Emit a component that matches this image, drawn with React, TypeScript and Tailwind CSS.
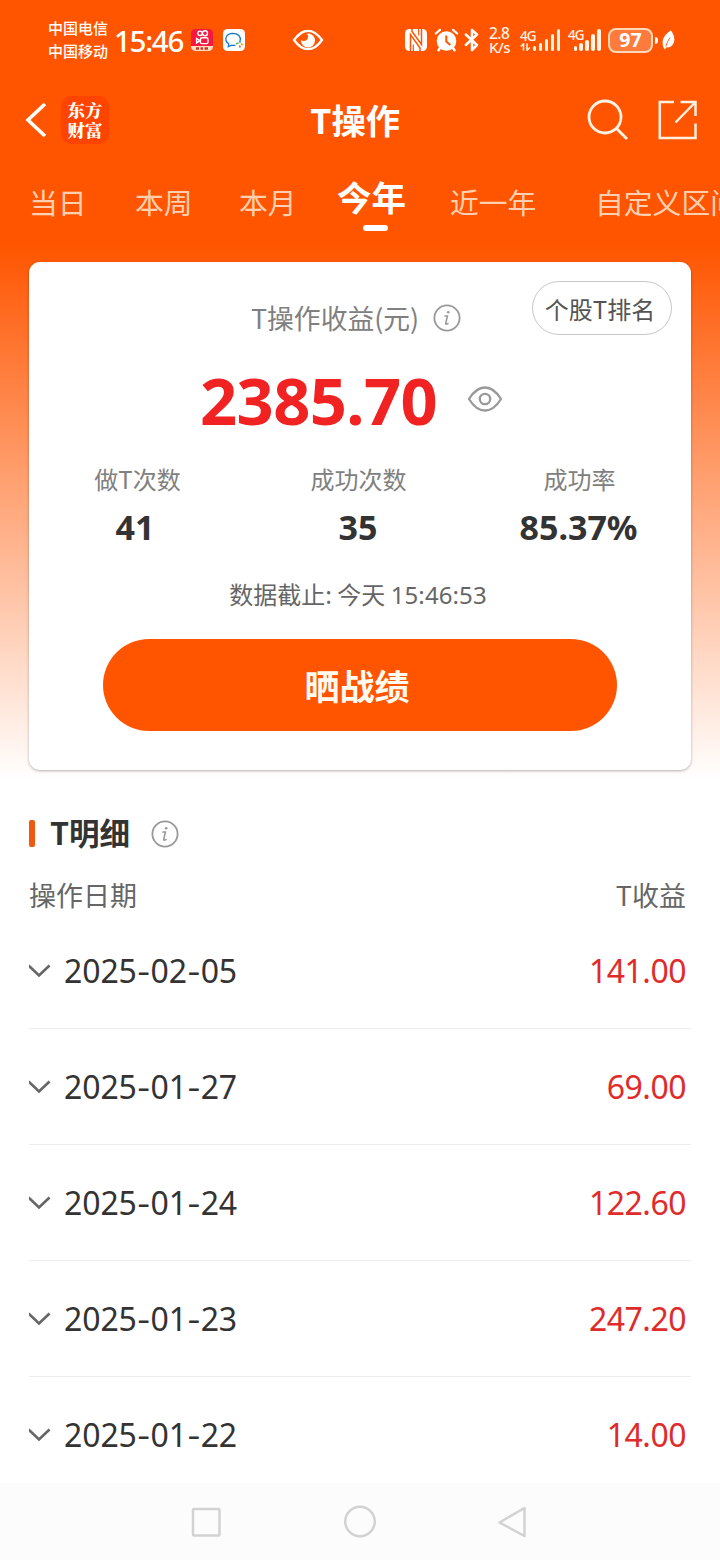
import type { ReactNode } from "react";

const rows = [
  { date: "2025-02-05", profit: "141.00" },
  { date: "2025-01-27", profit: "69.00" },
  { date: "2025-01-24", profit: "122.60" },
  { date: "2025-01-23", profit: "247.20" },
  { date: "2025-01-22", profit: "14.00" },
];

const tabs = [
  { label: "当日", box: "w-[106px]" },
  { label: "本周", box: "w-[104px]" },
  { label: "本月", box: "w-[98px]" },
  { label: "今年", box: "w-[113px]", active: true },
  { label: "近一年", box: "w-[145px]" },
  { label: "自定义区间", box: "w-[150px]" },
];

const stats = [
  { label: "做T次数", value: "41", nudge: "pr-[5px]" },
  { label: "成功次数", value: "35", nudge: "pr-[1px]" },
  { label: "成功率", value: "85.37%", nudge: "pr-[2px]" },
];

function InfoIcon({ className }: { className?: string }) {
  return (
    <svg className={className} width="28" height="28" viewBox="0 0 28 28" fill="none" stroke="#999" strokeWidth="1.8">
      <circle cx="14" cy="14" r="12.6" />
      <path d="M11.400 12h3l-1.600 7.200q-.2 1.300 1 .9l1.700-.8" strokeWidth="1.600" />
      <circle cx="15.200" cy="8.200" r="1.300" fill="#999" stroke="none" />
    </svg>
  );
}

function Signal({ heights, className }: { heights: number[]; className?: string }) {
  return (
    <div className={"flex items-end " + (className ?? "")}>
      {heights.map((h) => (
        <i key={h} className="block w-[3.600px] flex-none rounded-full bg-[#fff3e6]" style={{ height: h }} />
      ))}
    </div>
  );
}

function StatusBar() {
  return (
    <div className="flex h-[80px] items-center pl-[48px] text-white">
      <div className="mb-[2px] w-[66px] flex-none text-[15px] font-medium leading-[23px] whitespace-nowrap">
        <div>中国电信</div>
        <div>中国移动</div>
      </div>
      <div className="mt-[2px] w-[77px] flex-none font-['Noto_Sans'] text-[29.500px] font-medium leading-[40px] tracking-[-1.300px]">15:46</div>
      <svg className="flex-none" width="22" height="22" viewBox="0 0 22 22">
        <defs>
          <clipPath id="appTile"><rect width="22" height="22" rx="4.500" /></clipPath>
        </defs>
        <g clipPath="url(#appTile)">
          <rect width="22" height="22" fill="#f7173f" />
          <rect y="17" width="22" height="5" fill="#ffe0c0" />
          <g fill="none" stroke="#fff" strokeWidth="1.400">
            <circle cx="9" cy="4.300" r="2.200" />
            <circle cx="14" cy="4.300" r="2.500" />
            <rect x="9.400" y="8.800" width="7.600" height="5.800" rx="1.600" />
            <path d="M9 11.700 5.600 9.500v4.400z" />
          </g>
          <path d="M5 19.500h3M9.500 19.500h2.500M13.500 19.500h3.500" stroke="#c6362c" strokeWidth="2.400" />
        </g>
      </svg>
      <svg className="ml-[10px] flex-none" width="22" height="22" viewBox="0 0 22 22" fill="none">
        <rect width="22" height="22" rx="4.500" fill="#fff" />
        <path d="M12.500 16.200a7.800 7.800 0 0 1-3.800 0L5.300 17.600l.5-2.800C.6 11.400 2.600 4.500 9.800 4.300c5.200 0 8.300 3.600 7.500 7.400" stroke="#1677c9" strokeWidth="1.300" />
        <path d="m16.400 11.500 1 2.200" stroke="#2b91e3" strokeWidth="1.700" />
        <path d="m18 14.500 2 1.500" stroke="#f0b321" strokeWidth="1.800" />
        <path d="m16.500 16.500.7 2" stroke="#e85a36" strokeWidth="1.700" />
        <path d="m13 14.800 2.600-.8" stroke="#58b957" strokeWidth="1.700" />
      </svg>
      <svg className="ml-[47px] flex-none" width="32" height="22" viewBox="0 0 32 22">
        <path d="M2 11Q8.500 1.800 16 1.800t14 9.200q-6.500 9.200-14 9.200T2 11Z" fill="none" stroke="#fff" strokeWidth="2.300" />
        <circle cx="16" cy="11.500" r="7" fill="#fff" />
        <circle cx="11.800" cy="7.600" r="4.300" fill="#ff5500" />
        <path d="M5 7.800Q10 1.800 16 1.800" fill="none" stroke="#fff" strokeWidth="2.300" />
      </svg>
      <svg className="ml-[81px] flex-none" width="22" height="22" viewBox="0 0 22 22" fill="#fff">
        <rect width="22" height="22" rx="4.500" />
        <g fill="none" stroke="#ff5500" strokeWidth="1.500">
          <path d="M5.500 22V5.500L15 19v3M16.500 0v15.500L7 2.500V0" />
          <path d="M8.300 22v-6.500M13.700 0v6.500" strokeWidth="1.200" />
        </g>
      </svg>
      <svg className="ml-[7px] flex-none" width="25" height="24" viewBox="0 0 25 24" fill="none" stroke="#fff">
        <circle cx="12.500" cy="13" r="9.800" fill="#fff" stroke="none" />
        <path d="M1.800 5.500 6 1.800M23.200 5.500 19 1.800" strokeWidth="2.200" strokeLinecap="round" />
        <path d="m6 20-1.500 2.300M19 20l1.500 2.300" strokeWidth="2.500" strokeLinecap="round" />
        <path d="M12.300 7.500v6l4 3.500" stroke="#ff5500" strokeWidth="2" />
      </svg>
      <svg className="ml-[5px] flex-none" width="15" height="24" viewBox="0 0 15 24" fill="none" stroke="#fff" strokeWidth="2.500">
        <path d="m1.800 6.500 11.200 10.500-5 5V2l5 4.500L1.800 17" strokeLinejoin="round" strokeLinecap="round" />
      </svg>
      <div className="ml-[10px] w-[31px] flex-none font-['Noto_Sans'] text-[15.500px] font-medium leading-[14.500px] tracking-[-0.500px] text-[#fff3e6]">
        <div>2.8</div>
        <div className="text-[15px]">K/s</div>
      </div>
      <div className="flex h-[26px] w-[48px] flex-none items-end">
        <div className="w-[12.500px] flex-none font-['Noto_Sans'] text-[13.500px] font-medium leading-[14px] tracking-[-1px] text-[#fff3e6]">
          <div>4G</div>
          <svg className="mb-[2px]" width="11" height="8" viewBox="0 0 11 8" fill="none" stroke="#fff3e6" strokeWidth="1.500">
            <path d="M3.500 7.500V.8L.8 3.500M7 .5v6.700l2.800-2.700" />
          </svg>
        </div>
        <Signal heights={[5, 8, 12, 17, 22]} className="mb-[2px] gap-[2.500px]" />
      </div>
      <div className="flex h-[26px] w-[40px] flex-none items-end">
        <div className="mb-[11px] w-[5.500px] flex-none font-['Noto_Sans'] text-[13.500px] font-medium leading-[14px] tracking-[-1px] text-[#fff3e6]">4G</div>
        <Signal heights={[5, 8, 11, 17, 22]} className="mb-[2px] gap-[2.300px]" />
      </div>
      <div className="flex h-[25px] w-[45px] flex-none items-center justify-center rounded-[8px] border-2 border-[#ffd9b8] bg-[#ff7a3d] font-['Noto_Sans'] text-[19.500px] font-bold leading-[20px]">97</div>
      <i className="ml-[1.500px] block h-[7px] w-[3px] flex-none rounded-r-full bg-white" />
      <svg className="ml-[4.500px] flex-none" width="13" height="20" viewBox="0 0 13 20">
        <path d="M9 .5c3.500 5 4.500 10 1.800 14-1.500 2.200-4 3.200-6.300 2.800L3 19.500 1.700 18C-1 12 1 5 9 .5Z" fill="#fff" />
        <path d="M3.800 16.500Q5.500 11 8 7.500" fill="none" stroke="#ff5500" strokeWidth=".9" />
      </svg>
    </div>
  );
}

function Header() {
  return (
    <div className="flex h-[80px] items-center text-white">
      <svg className="ml-[24px] flex-none" width="24" height="36" viewBox="0 0 24 36" fill="none" stroke="#fff" strokeWidth="3.600">
        <path d="M21 2 4 18l17 16" />
      </svg>
      <div className="ml-[13px] flex h-[48px] w-[48px] flex-none flex-col items-center justify-center rounded-[10px] bg-[#ff4400] pb-[1px] font-['Noto_Serif_CJK_SC','Noto_Sans_CJK_SC',serif] text-[17.500px] font-black leading-[20px]">
        <div>东方</div>
        <div>财富</div>
      </div>
      <div className="mb-[2px] ml-[201px] w-[277px] flex-none text-[34.300px] font-bold leading-[48px]">T操作</div>
      <svg className="flex-none" width="42" height="42" viewBox="0 0 42 42" fill="none" stroke="#fff3e6" strokeWidth="2.800">
        <circle cx="18" cy="18" r="16" />
        <path d="m29 29 11 11" />
      </svg>
      <svg className="ml-[29px] flex-none" width="40" height="40" viewBox="0 0 40 40" fill="none" stroke="#fff0df" strokeWidth="2.500">
        <path d="M16 2H1.800v36H37.500V23.500M22.500 2h15V16M37.500 2 17.500 22.500" />
      </svg>
    </div>
  );
}

function Tabs() {
  return (
    <div className="flex h-[102px] overflow-hidden pl-[29px] whitespace-nowrap">
      {tabs.map((t) =>
        t.active ? (
          <div key={t.label} className={"flex-none pt-[12px] text-[34.500px] font-bold leading-[48px] text-white " + t.box}>
            {t.label}
            <i className="ml-[26px] mt-[5px] block h-[6px] w-[25px] rounded-full bg-white" />
          </div>
        ) : (
          <div key={t.label} className={"flex-none pt-[18px] text-[28.800px] leading-[48px] text-[#ffd0b0] " + t.box}>{t.label}</div>
        )
      )}
    </div>
  );
}

function SummaryCard() {
  return (
    <section className="mx-[29px] flex h-[508px] flex-col rounded-[11px] bg-white shadow-[0_1px_3px_rgba(0,0,0,0.3)]">
      <div className="flex h-[92px]">
        <div className="ml-[222px] mt-[36px] w-[182px] flex-none whitespace-nowrap text-[26.800px] leading-[40px] text-[#808080]">T操作收益(元)</div>
        <InfoIcon className="mt-[42px] flex-none" />
        <button className="ml-[71px] mt-[19px] flex h-[54px] w-[140px] flex-none items-center justify-center rounded-full border border-[#c8c8c8] pr-[4px] pt-[1px] text-[24px] whitespace-nowrap text-[#555]">个股T排名</button>
      </div>
      <div className="flex h-[100px] items-center">
        <div className="mb-[8px] ml-[171px] w-[267px] flex-none font-['Noto_Sans'] text-[65px] font-bold leading-[80px] tracking-[-0.600px] text-[#f02222]">2385.70</div>
        <svg className="mb-[10px]" width="36" height="28" viewBox="0 0 36 28" fill="none" stroke="#999" strokeWidth="2.300">
          <path d="M2 14Q9 2.500 18 2.500T34 14Q27 25.500 18 25.500T2 14Z" />
          <circle cx="18" cy="14" r="5.200" />
        </svg>
      </div>
      <Stats />
      <div className="mr-[4px] mt-[27px] text-center text-[24px] leading-[36px] text-[#666]">
        数据截止: 今天 <Num className="text-[24px] tracking-[0.100px]">15:46:53</Num>
      </div>
      <button className="mx-auto mt-[26px] h-[92px] w-[514px] flex-none rounded-full bg-[#ff5500] pr-[6px] text-[35px] font-bold text-[#fffaf0]">晒战绩</button>
    </section>
  );
}

function Num({ children, className }: { children: ReactNode; className?: string }) {
  return <span className={"font-['Noto_Sans'] " + (className ?? "")}>{children}</span>;
}

function Stats() {
  return (
    <div className="-ml-[2px] grid w-[663px] grid-cols-3 text-center">
      {stats.map((s) => (
        <div key={s.label}>
          <div className="mt-[7px] text-[24px] leading-[36px] text-[#808080]">{s.label}</div>
          <div className={"mt-[8px] font-['Noto_Sans'] text-[34px] font-bold leading-[44px] text-[#333] " + s.nudge}>{s.value}</div>
        </div>
      ))}
    </div>
  );
}

function DateLabel({ date }: { date: string }) {
  const [year, month, day] = date.split("-");
  const dash = <span className="font-['Inter'] text-[30px]">-</span>;
  return (
    <span className="ml-[13px] tracking-[-0.100px] text-[#333]">
      {year}{dash}{month}{dash}{day}
    </span>
  );
}

function Details() {
  return (
    <section className="mx-[29px] h-[713px] overflow-hidden pt-[39px]">
      <div className="flex h-[48px] items-center">
        <i className="block h-[27px] w-[6px] rounded-[2px] bg-[#f05a10]" />
        <h2 className="ml-[15px] w-[101px] text-[30.500px] font-bold text-[#333]">T明细</h2>
        <InfoIcon className="mt-px" />
      </div>
      <div className="mt-[18px] flex h-[38px] justify-between pr-[5px] text-[27px] leading-[40px] text-[#666]">
        <span>操作日期</span>
        <span>T收益</span>
      </div>
      {rows.map((r) => (
        <div key={r.date} className="flex h-[116px] items-center border-b border-[#ececec] pr-[5px] font-['Noto_Sans'] text-[32px]">
          <svg className="-ml-[2px] flex-none" width="24" height="16" viewBox="0 0 24 16" fill="none" stroke="#666" strokeWidth="2.700">
            <path d="m1.500 2.500 10.500 10L22.500 2.500" />
          </svg>
          <DateLabel date={r.date} />
          <span className="ml-auto tracking-[-0.500px] text-[#e02b2b]">{r.profit}</span>
        </div>
      ))}
    </section>
  );
}

function NavBar() {
  return (
    <nav className="flex h-[77px] items-center bg-[#fcfcfc]">
      <svg className="mx-auto" width="338" height="36" viewBox="0 0 338 36" fill="none" stroke="#d2d2d2" strokeWidth="2.500" strokeLinejoin="round">
        <rect x="2" y="5" width="26.500" height="26.500" rx="1" />
        <circle cx="169" cy="17.500" r="14.800" />
        <path d="M333.500 4v28L308.500 18.500Z" />
      </svg>
    </nav>
  );
}

export default function App() {
  return (
    <main className="h-[1560px] w-[720px] overflow-hidden bg-white bg-[linear-gradient(to_bottom,#ff5500_0px,#ff5500_245px,#ffffff_780px)] font-['Noto_Sans_CJK_SC',sans-serif]">
      <StatusBar />
      <Header />
      <Tabs />
      <SummaryCard />
      <Details />
      <NavBar />
    </main>
  );
}
